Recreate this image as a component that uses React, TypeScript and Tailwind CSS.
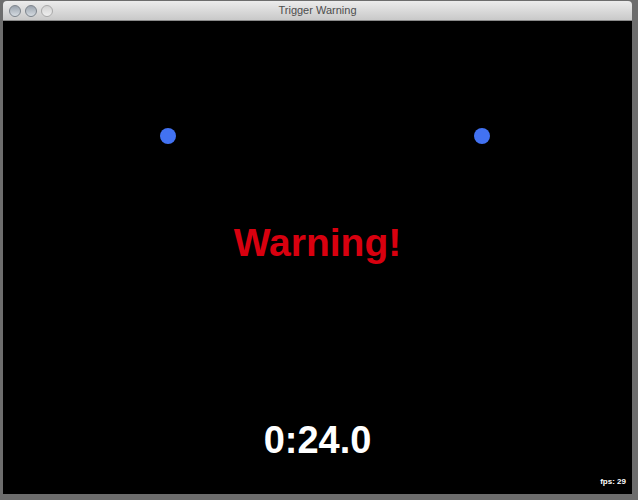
export default function App() {
  return (
    <div className="w-[638px] h-[500px] bg-[#6d6d6d] pt-px pl-[3px]" style={{ fontFamily: '"Liberation Sans", Arial, sans-serif' }}>
      <div className="w-[629px] h-[493px] flex flex-col">
        <div className="h-[20px] rounded-t-[4px] bg-gradient-to-b from-[#ececec] to-[#c9c9c9] relative flex items-center pl-[6px] gap-[4px] border-b border-[#8a8a8a]">
          <span className="w-[12px] h-[12px] rounded-full bg-gradient-to-b from-[#9aa3ad] to-[#d6dce2] border border-[#7d848c]" />
          <span className="w-[12px] h-[12px] rounded-full bg-gradient-to-b from-[#9aa3ad] to-[#d6dce2] border border-[#7d848c]" />
          <span className="w-[12px] h-[12px] rounded-full bg-gradient-to-b from-[#d2d2d2] to-[#efefef] border border-[#a9a9a9]" />
          <div className="absolute inset-0 flex items-center justify-center text-[11px] text-[#4d4d4d]">
            Trigger Warning
          </div>
        </div>
        <div className="flex-1 bg-black relative flex flex-col items-center pt-[199px]">
          <div className="absolute left-[157px] top-[107px] w-[16px] h-[16px] rounded-full bg-[#4272f2]" />
          <div className="absolute left-[471px] top-[107px] w-[16px] h-[16px] rounded-full bg-[#4272f2]" />
          <div className="text-[39px] leading-[46px] font-bold text-[#d8000f]">Warning!</div>
          <div className="mt-[151px] text-[38px] leading-[46px] font-bold text-white">0:24.0</div>
          <div className="self-end mt-auto mr-[6px] mb-[7px] text-[8px] leading-[10px] font-bold text-white">fps: 29</div>
        </div>
      </div>
    </div>
  );
}
